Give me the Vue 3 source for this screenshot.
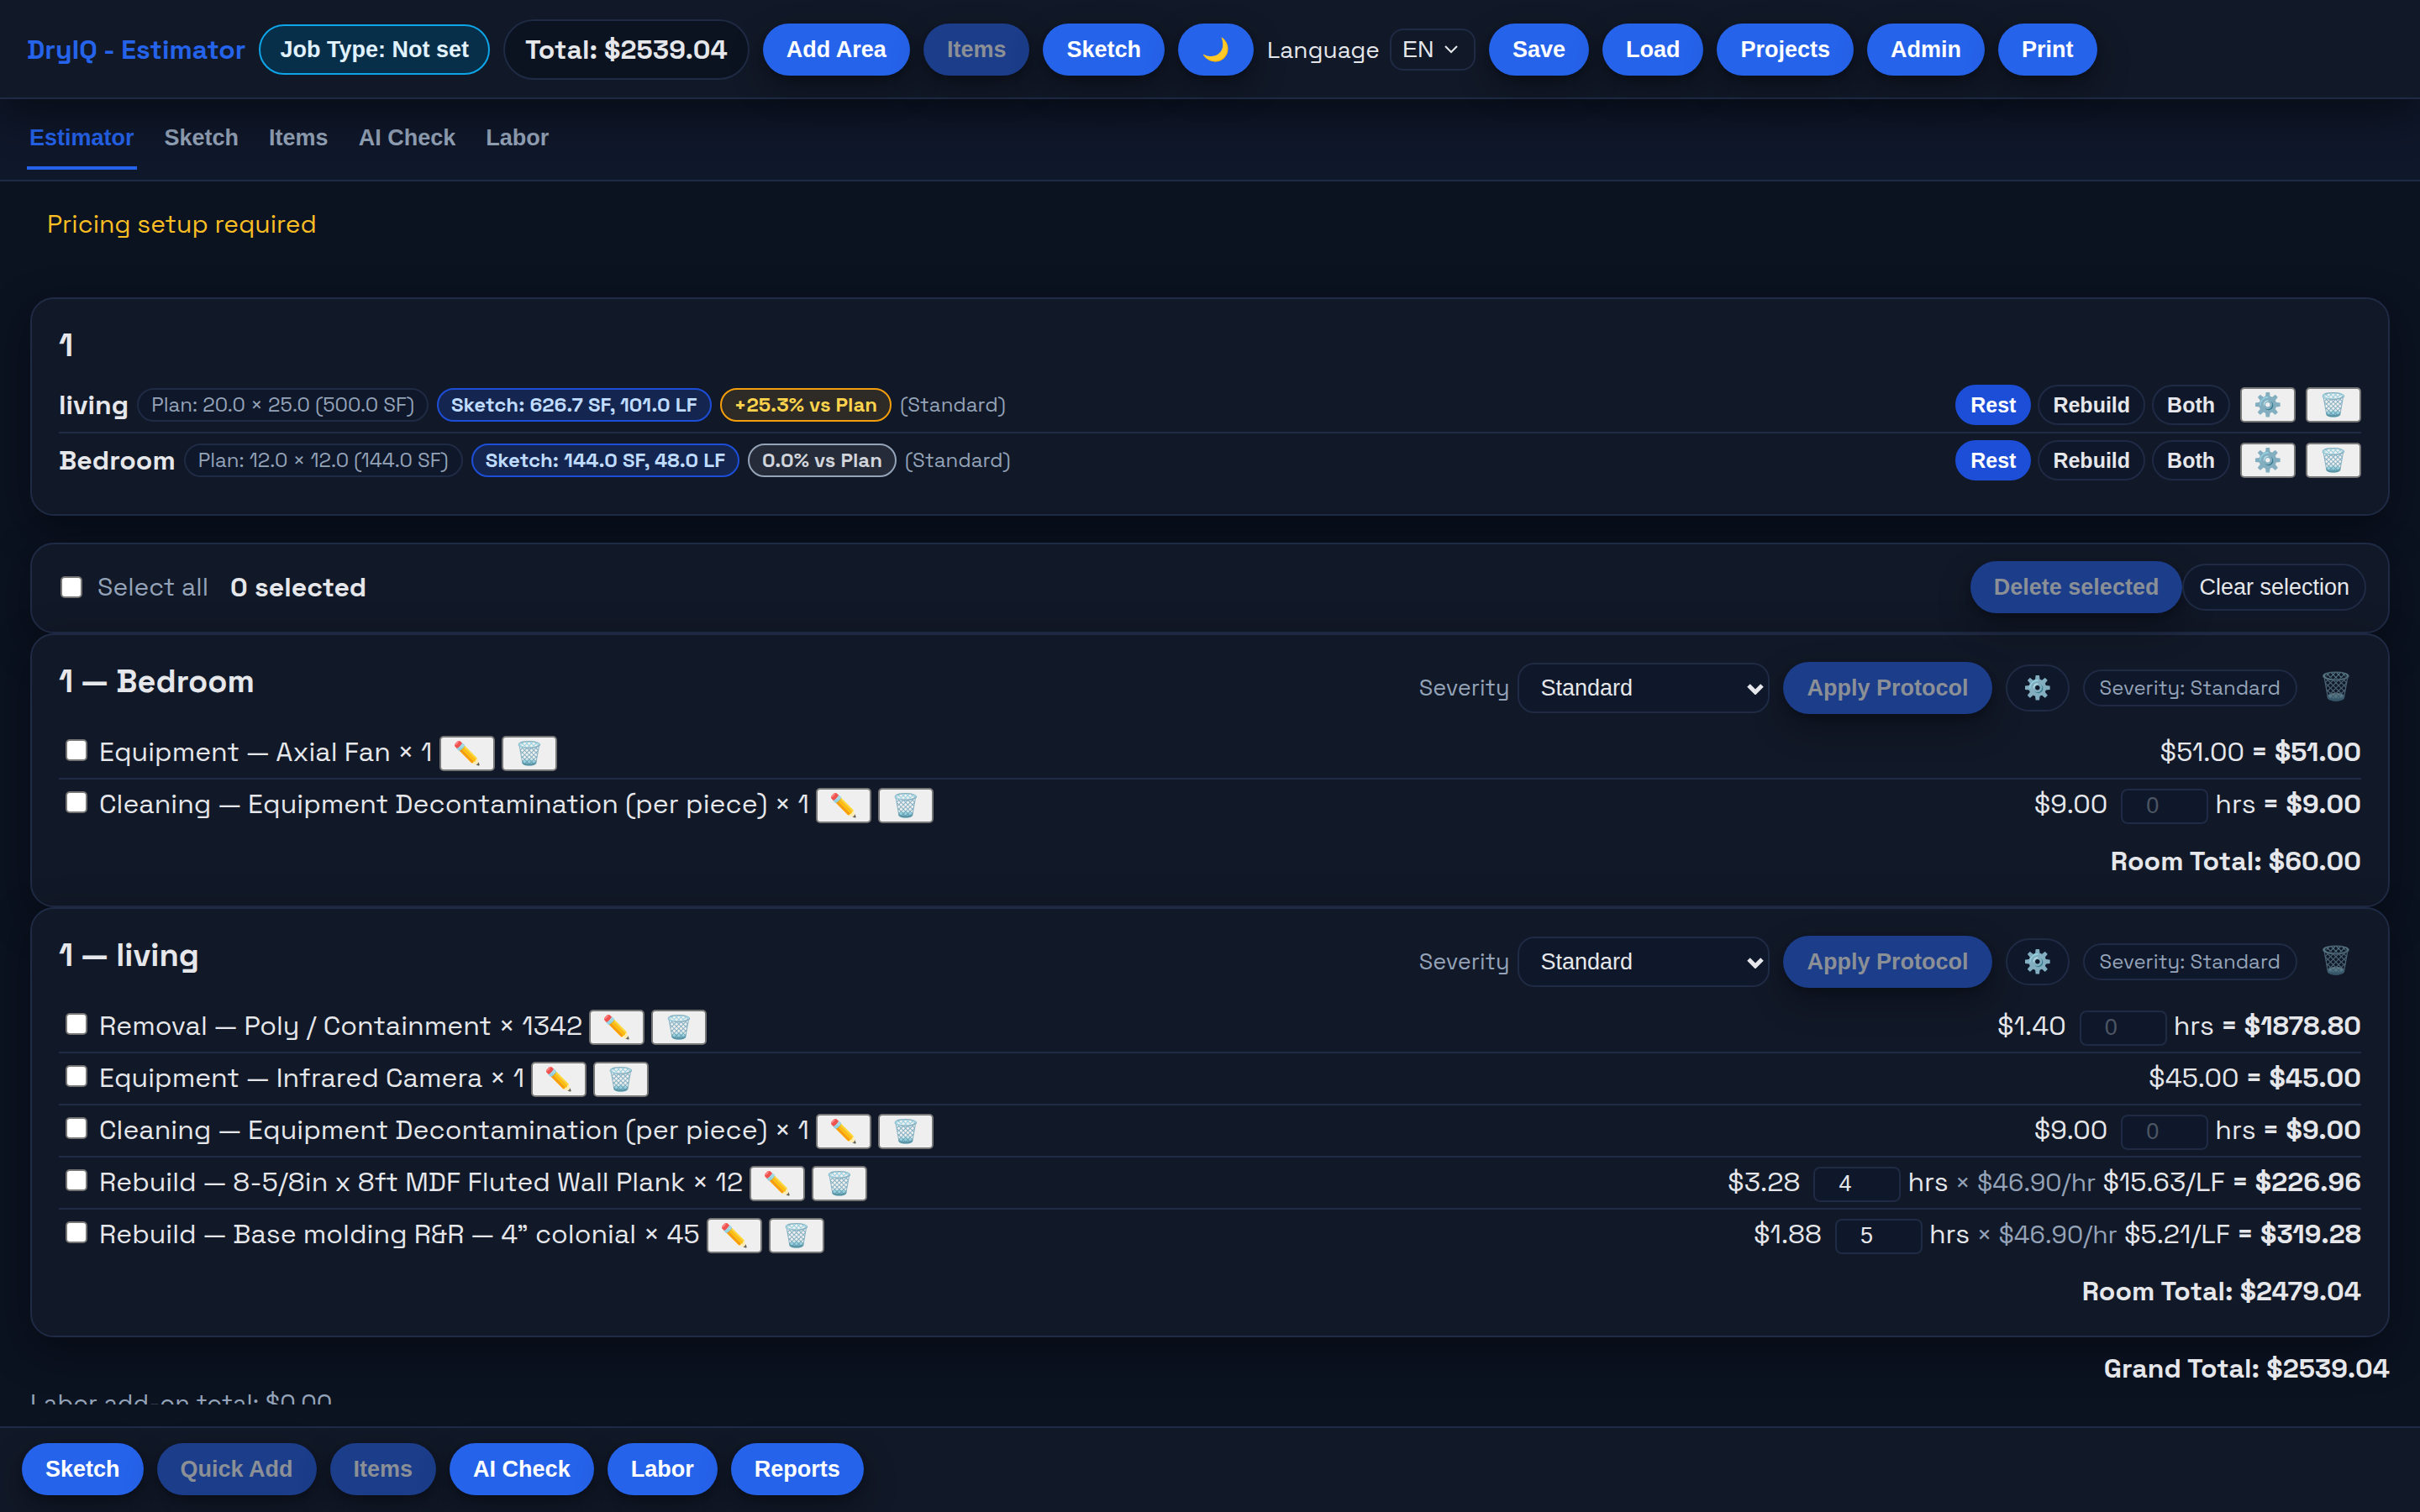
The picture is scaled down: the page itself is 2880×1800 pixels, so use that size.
<script setup>
import { ref } from 'vue'

const language = ref('EN')
const tabs = ['Estimator', 'Sketch', 'Items', 'AI Check', 'Labor']
const activeTab = ref('Estimator')

const headerTools = [
  { label: 'Add Area' },
  { label: 'Items', disabled: true },
  { label: 'Sketch' },
  { label: '🌙', title: 'Toggle theme' },
]
const headerActions = ['Save', 'Load', 'Projects', 'Admin', 'Print']
const footerActions = [
  { label: 'Sketch' },
  { label: 'Quick Add', disabled: true },
  { label: 'Items', disabled: true },
  { label: 'AI Check' },
  { label: 'Labor' },
  { label: 'Reports' },
]

const modes = ['Rest', 'Rebuild', 'Both']
const areas = ref([
  { name: 'living', plan: 'Plan: 20.0 × 25.0 (500.0 SF)', sketch: 'Sketch: 626.7 SF, 101.0 LF', diff: '+25.3% vs Plan', tone: 'warn', mode: 'Rest' },
  { name: 'Bedroom', plan: 'Plan: 12.0 × 12.0 (144.0 SF)', sketch: 'Sketch: 144.0 SF, 48.0 LF', diff: '0.0% vs Plan', tone: 'even', mode: 'Rest' },
])

const rooms = ref([
  {
    id: 'bedroom',
    title: '1 — Bedroom',
    severity: 'Standard',
    total: '$60.00',
    items: [
      { name: 'Equipment — Axial Fan × 1', price: '$51.00', total: '$51.00' },
      { name: 'Cleaning — Equipment Decontamination (per piece) × 1', price: '$9.00', hours: '', timed: true, total: '$9.00' },
    ],
  },
  {
    id: 'living',
    title: '1 — living',
    severity: 'Standard',
    total: '$2479.04',
    items: [
      { name: 'Removal — Poly / Containment × 1342', price: '$1.40', hours: '', timed: true, total: '$1878.80' },
      { name: 'Equipment — Infrared Camera × 1', price: '$45.00', total: '$45.00' },
      { name: 'Cleaning — Equipment Decontamination (per piece) × 1', price: '$9.00', hours: '', timed: true, total: '$9.00' },
      { name: 'Rebuild — 8-5/8in x 8ft MDF Fluted Wall Plank × 12', price: '$3.28', hours: '4', timed: true, rate: '× $46.90/hr', unit: '$15.63/LF', total: '$226.96' },
      { name: 'Rebuild — Base molding R&R — 4” colonial × 45', price: '$1.88', hours: '5', timed: true, rate: '× $46.90/hr', unit: '$5.21/LF', total: '$319.28' },
    ],
  },
])
</script>

<template>
  <div class="app">
    <header class="topbar">
      <h1 class="brand">DryIQ - Estimator</h1>
      <button type="button" class="job-type">Job Type: Not set</button>
      <div class="total-chip">Total: $2539.04</div>
      <button v-for="t in headerTools" :key="t.label" type="button" class="btn" :disabled="t.disabled" :title="t.title">{{ t.label }}</button>
      <div class="language">
        <label for="language">Language</label>
        <div class="select-wrap">
          <select id="language" v-model="language" class="lang-select">
            <option>EN</option>
            <option>ES</option>
          </select>
          <svg class="chev thin" viewBox="0 0 18 12" aria-hidden="true"><path d="M2 2l7 7 7-7" /></svg>
        </div>
      </div>
      <button v-for="a in headerActions" :key="a" type="button" class="btn">{{ a }}</button>
    </header>

    <nav class="tabs">
      <button v-for="t in tabs" :key="t" type="button" class="tab" :class="{ active: t === activeTab }" @click="activeTab = t">{{ t }}</button>
    </nav>

    <main class="content">
      <p class="notice">Pricing setup required</p>

      <section class="card areas">
        <h2 class="card-title">1</h2>
        <div v-for="a in areas" :key="a.name" class="row">
          <div class="area-info">
            <span class="area-name">{{ a.name }}</span>
            <span class="pill plan">{{ a.plan }}</span>
            <span class="pill sketch">{{ a.sketch }}</span>
            <span class="pill" :class="a.tone">{{ a.diff }}</span>
            <span class="grade">(Standard)</span>
          </div>
          <div class="area-actions">
            <div class="modes">
              <button v-for="m in modes" :key="m" type="button" class="mode" :class="{ on: m === a.mode }" @click="a.mode = m">{{ m }}</button>
            </div>
            <button type="button" class="mini" aria-label="Area settings">⚙️</button>
            <button type="button" class="mini" aria-label="Delete area">🗑️</button>
          </div>
        </div>
      </section>

      <section class="card selection">
        <label class="select-all"><input type="checkbox" class="check" />Select all</label>
        <strong class="count">0 selected</strong>
        <button type="button" class="btn push" disabled>Delete selected</button>
        <button type="button" class="ghost">Clear selection</button>
      </section>

      <section v-for="room in rooms" :key="room.id" class="card">
        <div class="room-head">
          <h2 class="card-title">{{ room.title }}</h2>
          <div class="room-tools">
            <div class="severity">
              <label :for="'severity-' + room.id">Severity</label>
              <div class="select-wrap">
                <select :id="'severity-' + room.id" v-model="room.severity" class="severity-select">
                  <option>Standard</option>
                  <option>Heavy</option>
                </select>
                <svg class="chev bold" viewBox="0 0 20 14" aria-hidden="true"><path d="M2 3l8 8 8-8" /></svg>
              </div>
            </div>
            <button type="button" class="btn" disabled>Apply Protocol</button>
            <button type="button" class="ghost gear" aria-label="Room settings">⚙️</button>
            <span class="severity-pill">Severity: {{ room.severity }}</span>
            <button type="button" class="bin" aria-label="Delete room">🗑️</button>
          </div>
        </div>
        <div v-for="(item, i) in room.items" :key="item.name" class="row">
          <div class="item">
            <input :id="room.id + '-' + i" type="checkbox" class="check" />
            <label :for="room.id + '-' + i">{{ item.name }}</label>
            <button type="button" class="mini" aria-label="Edit item">✏️</button>
            <button type="button" class="mini" aria-label="Delete item">🗑️</button>
          </div>
          <div class="price">
            <span>{{ item.price }}</span>
            <label v-if="item.timed" class="hours"><input v-model="item.hours" type="text" inputmode="decimal" placeholder="0" />hrs</label>
            <span v-if="item.rate" class="rate">{{ item.rate }}</span>
            <span v-if="item.unit">{{ item.unit }}</span>
            <strong>= {{ item.total }}</strong>
          </div>
        </div>
        <p class="room-total">Room Total: {{ room.total }}</p>
      </section>

      <p class="grand-total">Grand Total: $2539.04</p>
      <p class="addon">Labor add-on total: $0.00</p>
    </main>

    <footer class="bottombar">
      <button v-for="a in footerActions" :key="a.label" type="button" class="btn" :disabled="a.disabled">{{ a.label }}</button>
    </footer>
  </div>
</template>

<style>
body {
  margin: 0;
  background: #0b1220;
}
</style>

<style scoped>
.app {
  --line: #1f2a44;
  --panel: #111827;
  --field: #0f172a;
  --text: #e5e7eb;
  --muted: #94a3b8;
  --primary: #2563eb;
  --ui: "Liberation Sans", Arial, sans-serif;
  display: flex;
  flex-direction: column;
  height: 100vh;
  overflow: hidden;
  color: var(--text);
  font-family: "Space Grotesk", Inter, sans-serif;
  font-size: 32px;
  line-height: 42px;
}
.app * { box-sizing: border-box; }
h1, h2, p { margin: 0; }
button, select, input { font-family: var(--ui); font-size: 27px; line-height: 30px; margin: 0; }

.topbar {
  position: relative;
  z-index: 1;
  display: flex;
  flex: none;
  align-items: center;
  gap: 16px;
  height: 118px;
  padding: 2px 32px 0;
  background: var(--panel);
  border-bottom: 2px solid var(--line);
  box-shadow: 0 20px 50px rgba(0, 0, 0, 0.45);
}
.brand { color: var(--primary); font-size: 32px; font-weight: 700; white-space: nowrap; }
.job-type {
  padding: 13px 23px;
  border: 2px solid #0ea5e9;
  border-radius: 30px;
  background: #082f49;
  color: #e0f2fe;
  font-weight: 700;
}
.total-chip {
  padding: 13px 24px;
  border: 2px solid var(--line);
  border-radius: 36px;
  background: #0b1220;
  font-weight: 600;
  white-space: nowrap;
}
.btn {
  padding: 16px 28px;
  border: 0;
  border-radius: 31px;
  background: var(--primary);
  color: #fff;
  font-weight: 700;
  white-space: nowrap;
  box-shadow: 0 16px 40px rgba(0, 0, 0, 0.3), 0 4px 8px rgba(0, 0, 0, 0.2);
}
.btn:disabled { background: #1b3d8a; color: #8b8f96; }
.language { display: flex; align-items: center; gap: 12px; font-size: 28px; }
.select-wrap { position: relative; display: flex; }
select { appearance: none; border: 2px solid var(--line); color: var(--text); }
.lang-select { width: 102px; height: 50px; padding: 0 13px; border-radius: 16px; background: #111827; }
.chev { position: absolute; fill: none; stroke: currentColor; pointer-events: none; }
.thin { top: 19px; right: 20px; width: 18px; stroke-width: 2; }
.bold { top: 24px; right: 7px; width: 20px; stroke-width: 5; }

.tabs {
  display: flex;
  flex: none;
  gap: 30px;
  height: 98px;
  padding: 12px 32px;
  background: var(--field);
  border-bottom: 2px solid var(--line);
}
.tab {
  padding: 0 3px;
  border: 0;
  border-bottom: 4px solid transparent;
  background: none;
  color: var(--muted);
  font-weight: 700;
}
.tab.active { border-color: var(--primary); color: var(--primary); }

.content { flex: 1; min-height: 0; margin-bottom: 26px; overflow: hidden; padding: 30px 36px 0; }
.notice { padding-left: 20px; margin-bottom: 66px; color: #fbbf24; font-size: 30px; }
.card {
  padding: 32px;
  border: 2px solid var(--line);
  border-radius: 28px;
  background: var(--panel);
  box-shadow: 0 16px 50px rgba(0, 0, 0, 0.35);
}
.card-title { font-size: 38px; font-weight: 700; line-height: 46px; }
.areas { margin-bottom: 32px; }
.areas .card-title { margin-bottom: 16px; }
.row { display: flex; align-items: center; justify-content: space-between; padding: 8px 0; border-bottom: 2px solid var(--line); }
.row > div { height: 44px; display: flex; align-items: baseline; white-space: nowrap; }
.areas .row > div { height: 48px; align-items: center; }
.areas .row:last-of-type { border-bottom: 0; }
.row:has(+ .room-total) { border-bottom: 0; }
.area-info { gap: 10px; font-size: 24px; }
.area-name { font-size: 32px; font-weight: 600; }
.pill { padding: 3px 15px; border: 2px solid; border-radius: 20px; line-height: 30px; font-weight: 600; }
.plan { border-color: var(--line); background: var(--field); color: var(--muted); font-weight: 400; }
.sketch { border-color: #1d4ed8; background: #14264f; color: #bfdbfe; }
.warn { border-color: #f59e0b; background: #2e2a25; color: #fcd34d; }
.even { border-color: #94a3b8; background: #252b39; color: #d1d5db; }
.grade { color: var(--muted); }
.area-actions { gap: 12px; }
.modes { display: flex; gap: 8px; }
.mode {
  height: 48px;
  padding: 0 16px;
  border: 2px solid var(--line);
  border-radius: 24px;
  background: var(--field);
  color: var(--text);
  font-size: 25px;
  font-weight: 700;
}
.mode.on { border-color: #1d4ed8; background: #1d4ed8; color: #fff; }
.mini {
  width: 66px;
  height: 42px;
  padding: 0;
  border: 2px solid #767676;
  border-radius: 5px;
  background: #efefef;
  color: #000;
  text-align: center;
}
.check {
  appearance: none;
  flex: none;
  width: 26px;
  height: 26px;
  border: 2px solid #767676;
  border-radius: 5px;
  background: #fff;
}

.selection { display: flex; align-items: center; padding: 20px 26px 22px 34px; }
.select-all { display: flex; align-items: center; gap: 18px; color: var(--muted); font-size: 30px; }
.count { margin-left: 26px; font-size: 32px; font-weight: 700; }
.push { margin-left: auto; }
.ghost {
  padding: 11px 18px;
  border: 2px solid var(--line);
  border-radius: 28px;
  background: var(--field);
  color: var(--text);
}
.room-head { display: flex; justify-content: space-between; margin-bottom: 16px; }
.room-tools { display: flex; align-items: center; gap: 16px; }
.severity { display: flex; align-items: center; gap: 10px; color: var(--muted); font-size: 27px; }
.severity-select { width: 300px; height: 60px; padding: 0 25px; border-radius: 20px; background: var(--field); }
.severity .select-wrap { color: var(--text); }
.gear { width: 76px; }
.severity-pill { padding: 5px 18px; border: 2px solid var(--line); border-radius: 22px; background: var(--field); color: var(--muted); font-size: 24px; line-height: 30px; }
.bin { width: 60px; padding: 0 0 4px; border: 0; background: none; font-size: 32px; line-height: 40px; opacity: 0.5; }
.item .check { margin: 0 14px 0 8px; }
.item .mini { margin-left: 8px; }
.price { gap: 8px; }
.hours { display: flex; align-items: baseline; gap: 8px; margin-left: 8px; }
.hours input {
  width: 104px;
  height: 42px;
  padding: 0 28px;
  border: 2px solid var(--line);
  border-radius: 8px;
  background: var(--field);
  color: var(--text);
}
.hours input::placeholder { color: #4b5563; opacity: 1; }
.rate { color: var(--muted); font-size: 30px; }
.room-total { margin-top: 16px; text-align: right; font-weight: 600; }
.grand-total { margin-top: 16px; text-align: right; font-weight: 600; }
.addon { color: var(--muted); font-size: 29px; }

.bottombar {
  display: flex;
  flex: none;
  gap: 16px;
  padding: 18px 26px 20px;
  border-top: 2px solid var(--line);
  background: var(--panel);
}
</style>
